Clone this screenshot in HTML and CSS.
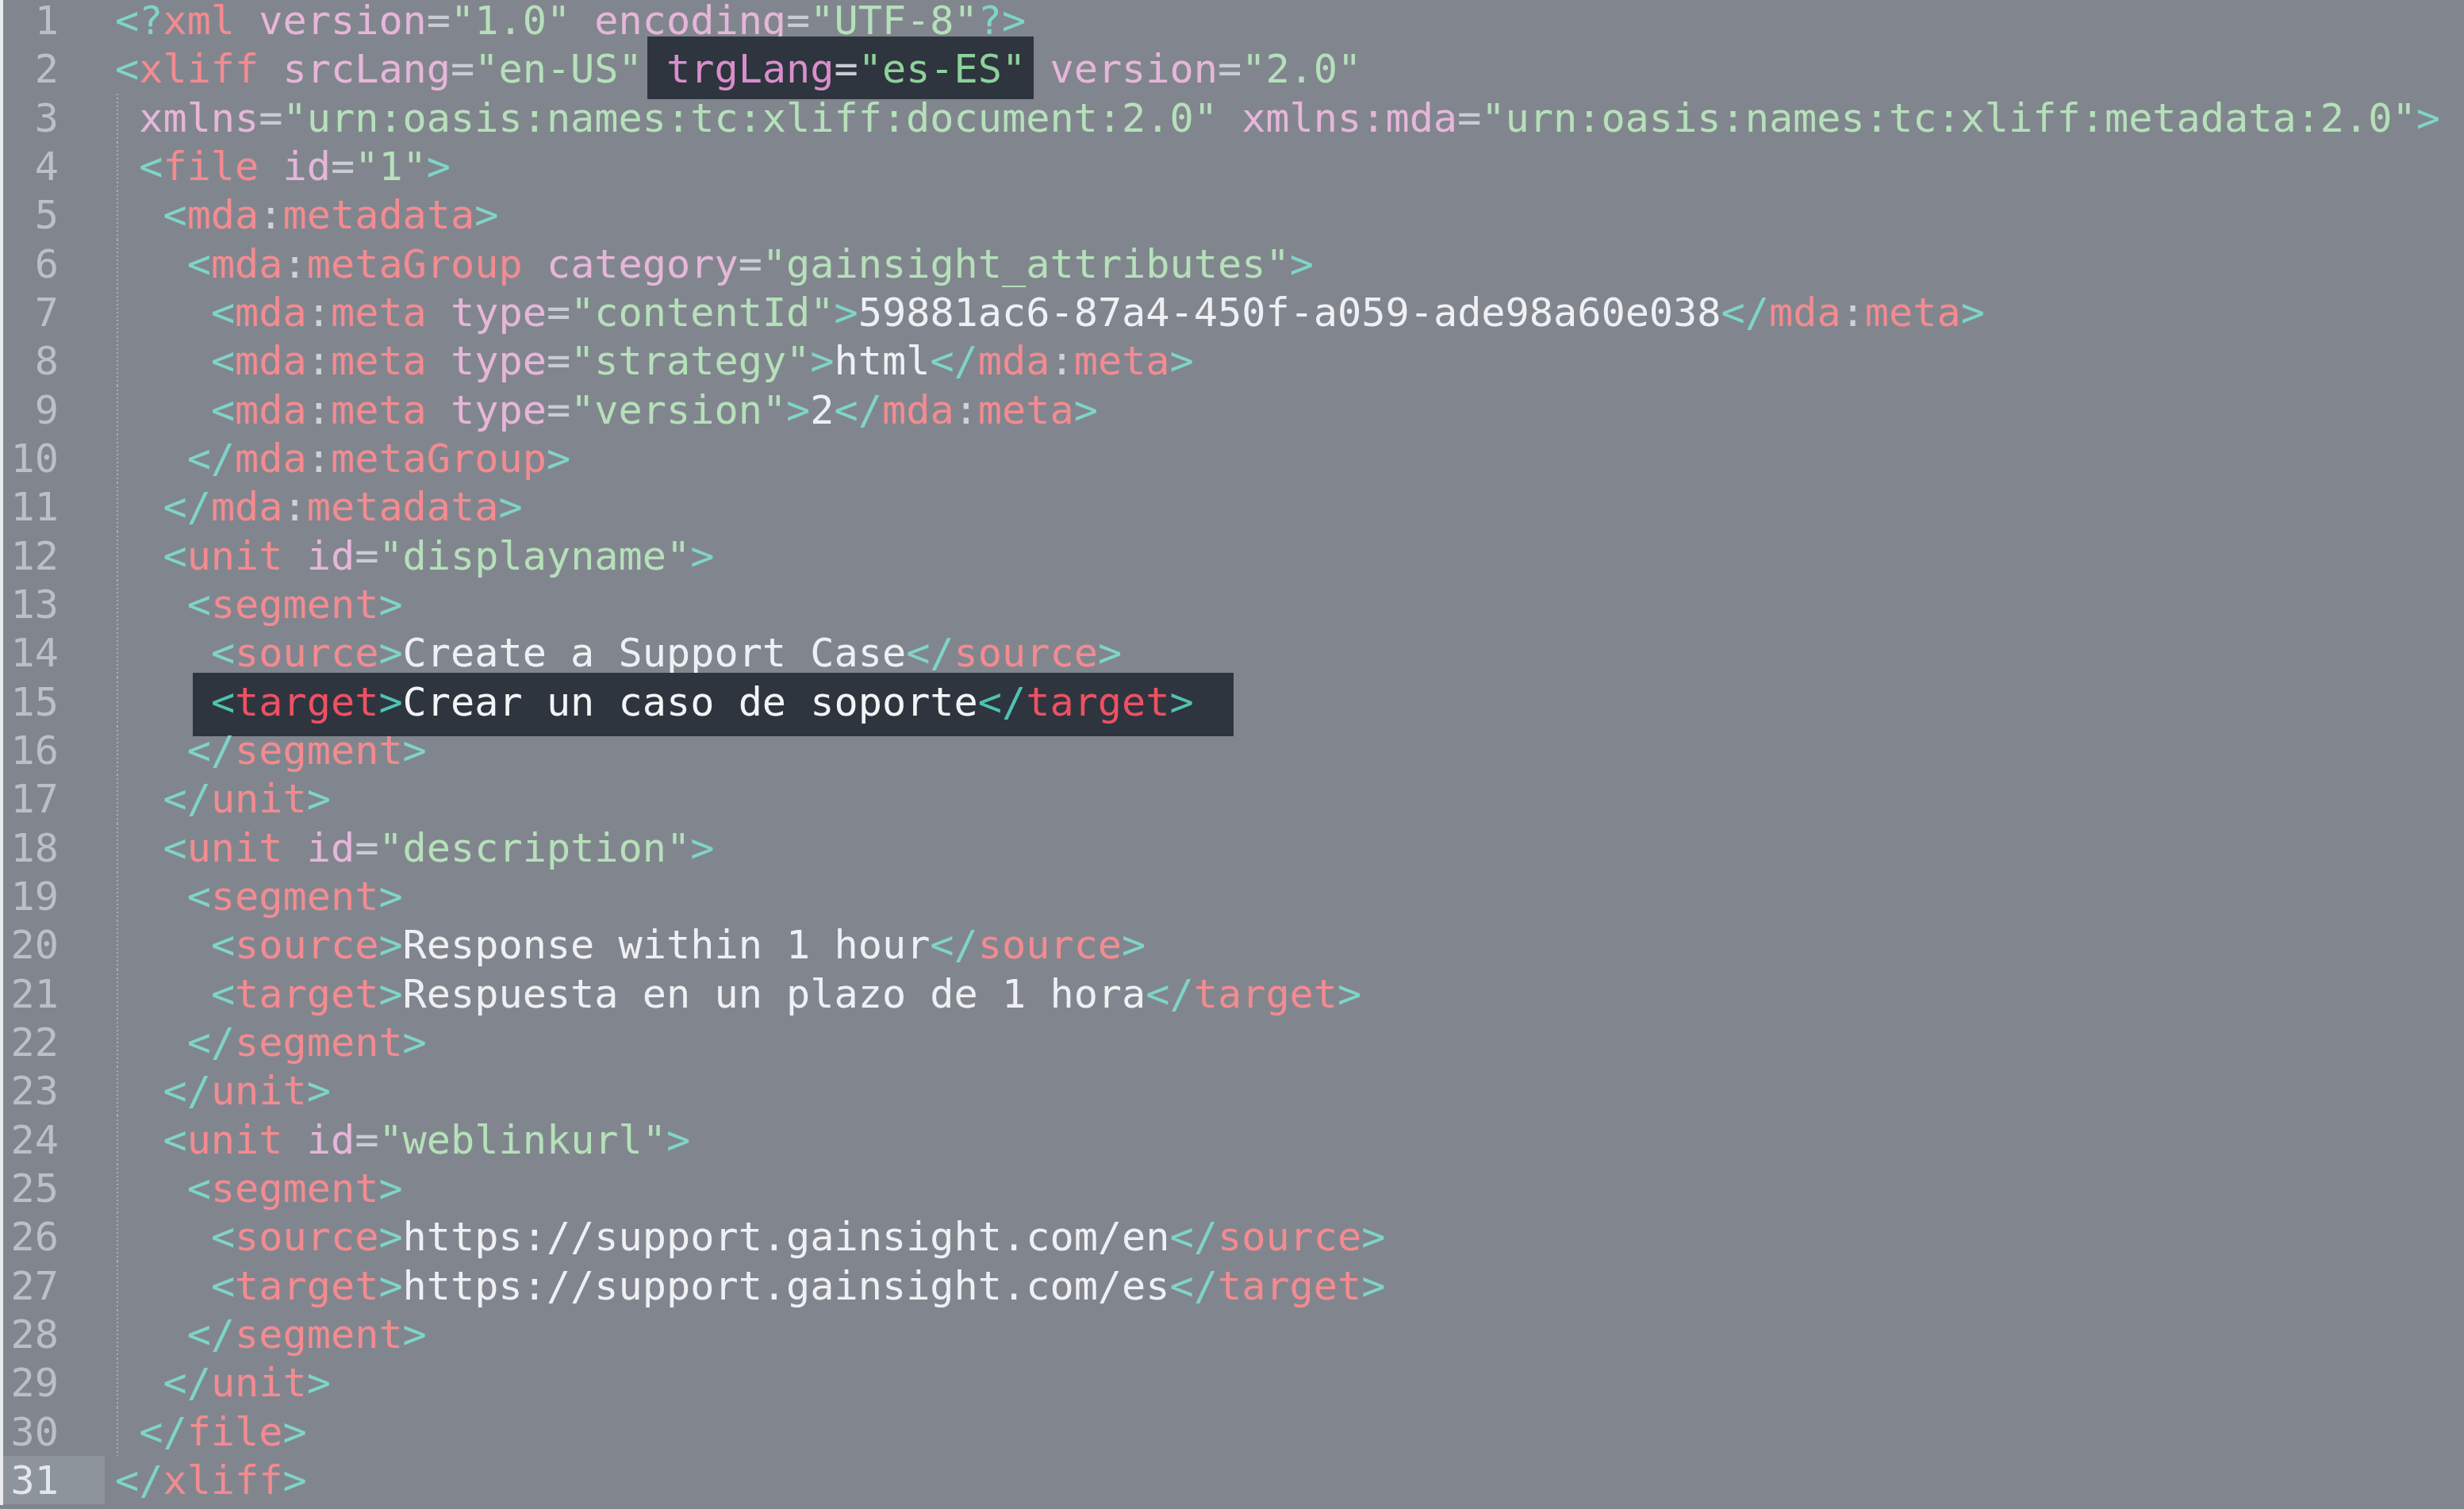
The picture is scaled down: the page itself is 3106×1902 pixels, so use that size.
FILE: index.html
```html
<!DOCTYPE html>
<html lang="en">
<head>
    <meta charset="UTF-8">
    <meta name="viewport" content="width=device-width, initial-scale=1.0">
    <title>strings_es-ES.xlf</title>
    <link rel="stylesheet" href="styles.css">
</head>
<body>
    <div class="editor">
        <div class="line"><span class="ln">1</span><span class="code"><span class="p">&lt;?</span><span class="t">xml</span> <span class="a">version</span><span class="e">=</span><span class="s">"1.0"</span> <span class="a">encoding</span><span class="e">=</span><span class="s">"UTF-8"</span><span class="p">?&gt;</span></span></div>
        <div class="line"><span class="ln">2</span><span class="code"><span class="p">&lt;</span><span class="t">xliff</span> <span class="a">srcLang</span><span class="e">=</span><span class="s">"en-US"</span> <span class="mark mark-attr"><span class="a">trgLang</span><span class="e">=</span><span class="s">"es-ES"</span></span> <span class="a">version</span><span class="e">=</span><span class="s">"2.0"</span></span></div>
        <div class="line guide"><span class="ln">3</span><span class="code"> <span class="a">xmlns</span><span class="e">=</span><span class="s">"urn:oasis:names:tc:xliff:document:2.0"</span> <span class="a">xmlns:mda</span><span class="e">=</span><span class="s">"urn:oasis:names:tc:xliff:metadata:2.0"</span><span class="p">&gt;</span></span></div>
        <div class="line guide"><span class="ln">4</span><span class="code"> <span class="p">&lt;</span><span class="t">file</span> <span class="a">id</span><span class="e">=</span><span class="s">"1"</span><span class="p">&gt;</span></span></div>
        <div class="line guide"><span class="ln">5</span><span class="code">  <span class="p">&lt;</span><span class="t">mda<span class="c">:</span>metadata</span><span class="p">&gt;</span></span></div>
        <div class="line guide"><span class="ln">6</span><span class="code">   <span class="p">&lt;</span><span class="t">mda<span class="c">:</span>metaGroup</span> <span class="a">category</span><span class="e">=</span><span class="s">"gainsight_attributes"</span><span class="p">&gt;</span></span></div>
        <div class="line guide"><span class="ln">7</span><span class="code">    <span class="p">&lt;</span><span class="t">mda<span class="c">:</span>meta</span> <span class="a">type</span><span class="e">=</span><span class="s">"contentId"</span><span class="p">&gt;</span><span class="x">59881ac6-87a4-450f-a059-ade98a60e038</span><span class="p">&lt;/</span><span class="t">mda<span class="c">:</span>meta</span><span class="p">&gt;</span></span></div>
        <div class="line guide"><span class="ln">8</span><span class="code">    <span class="p">&lt;</span><span class="t">mda<span class="c">:</span>meta</span> <span class="a">type</span><span class="e">=</span><span class="s">"strategy"</span><span class="p">&gt;</span><span class="x">html</span><span class="p">&lt;/</span><span class="t">mda<span class="c">:</span>meta</span><span class="p">&gt;</span></span></div>
        <div class="line guide"><span class="ln">9</span><span class="code">    <span class="p">&lt;</span><span class="t">mda<span class="c">:</span>meta</span> <span class="a">type</span><span class="e">=</span><span class="s">"version"</span><span class="p">&gt;</span><span class="x">2</span><span class="p">&lt;/</span><span class="t">mda<span class="c">:</span>meta</span><span class="p">&gt;</span></span></div>
        <div class="line guide"><span class="ln">10</span><span class="code">   <span class="p">&lt;/</span><span class="t">mda<span class="c">:</span>metaGroup</span><span class="p">&gt;</span></span></div>
        <div class="line guide"><span class="ln">11</span><span class="code">  <span class="p">&lt;/</span><span class="t">mda<span class="c">:</span>metadata</span><span class="p">&gt;</span></span></div>
        <div class="line guide"><span class="ln">12</span><span class="code">  <span class="p">&lt;</span><span class="t">unit</span> <span class="a">id</span><span class="e">=</span><span class="s">"displayname"</span><span class="p">&gt;</span></span></div>
        <div class="line guide"><span class="ln">13</span><span class="code">   <span class="p">&lt;</span><span class="t">segment</span><span class="p">&gt;</span></span></div>
        <div class="line guide"><span class="ln">14</span><span class="code">    <span class="p">&lt;</span><span class="t">source</span><span class="p">&gt;</span><span class="x">Create a Support Case</span><span class="p">&lt;/</span><span class="t">source</span><span class="p">&gt;</span></span></div>
        <div class="line guide"><span class="ln">15</span><span class="code">    <span class="mark mark-line"><span class="p">&lt;</span><span class="t">target</span><span class="p">&gt;</span><span class="x">Crear un caso de soporte</span><span class="p">&lt;/</span><span class="t">target</span><span class="p">&gt;</span></span></span></div>
        <div class="line guide"><span class="ln">16</span><span class="code">   <span class="p">&lt;/</span><span class="t">segment</span><span class="p">&gt;</span></span></div>
        <div class="line guide"><span class="ln">17</span><span class="code">  <span class="p">&lt;/</span><span class="t">unit</span><span class="p">&gt;</span></span></div>
        <div class="line guide"><span class="ln">18</span><span class="code">  <span class="p">&lt;</span><span class="t">unit</span> <span class="a">id</span><span class="e">=</span><span class="s">"description"</span><span class="p">&gt;</span></span></div>
        <div class="line guide"><span class="ln">19</span><span class="code">   <span class="p">&lt;</span><span class="t">segment</span><span class="p">&gt;</span></span></div>
        <div class="line guide"><span class="ln">20</span><span class="code">    <span class="p">&lt;</span><span class="t">source</span><span class="p">&gt;</span><span class="x">Response within 1 hour</span><span class="p">&lt;/</span><span class="t">source</span><span class="p">&gt;</span></span></div>
        <div class="line guide"><span class="ln">21</span><span class="code">    <span class="p">&lt;</span><span class="t">target</span><span class="p">&gt;</span><span class="x">Respuesta en un plazo de 1 hora</span><span class="p">&lt;/</span><span class="t">target</span><span class="p">&gt;</span></span></div>
        <div class="line guide"><span class="ln">22</span><span class="code">   <span class="p">&lt;/</span><span class="t">segment</span><span class="p">&gt;</span></span></div>
        <div class="line guide"><span class="ln">23</span><span class="code">  <span class="p">&lt;/</span><span class="t">unit</span><span class="p">&gt;</span></span></div>
        <div class="line guide"><span class="ln">24</span><span class="code">  <span class="p">&lt;</span><span class="t">unit</span> <span class="a">id</span><span class="e">=</span><span class="s">"weblinkurl"</span><span class="p">&gt;</span></span></div>
        <div class="line guide"><span class="ln">25</span><span class="code">   <span class="p">&lt;</span><span class="t">segment</span><span class="p">&gt;</span></span></div>
        <div class="line guide"><span class="ln">26</span><span class="code">    <span class="p">&lt;</span><span class="t">source</span><span class="p">&gt;</span><span class="x">https://support.gainsight.com/en</span><span class="p">&lt;/</span><span class="t">source</span><span class="p">&gt;</span></span></div>
        <div class="line guide"><span class="ln">27</span><span class="code">    <span class="p">&lt;</span><span class="t">target</span><span class="p">&gt;</span><span class="x">https://support.gainsight.com/es</span><span class="p">&lt;/</span><span class="t">target</span><span class="p">&gt;</span></span></div>
        <div class="line guide"><span class="ln">28</span><span class="code">   <span class="p">&lt;/</span><span class="t">segment</span><span class="p">&gt;</span></span></div>
        <div class="line guide"><span class="ln">29</span><span class="code">  <span class="p">&lt;/</span><span class="t">unit</span><span class="p">&gt;</span></span></div>
        <div class="line guide"><span class="ln">30</span><span class="code"> <span class="p">&lt;/</span><span class="t">file</span><span class="p">&gt;</span></span></div>
        <div class="line current"><span class="ln">31</span><span class="code"><span class="p">&lt;/</span><span class="t">xliff</span><span class="p">&gt;</span></span></div>
    </div>
</body>
</html>
```

FILE: styles.css
```css
html, body {
    margin: 0;
    padding: 0;
    background-color: #81868e;
}
body {
    min-height: 1902px;
    overflow: hidden;
}
.editor {
    border-left: 4px solid #e9ebee;
    min-height: 1902px;
    box-sizing: border-box;
    margin-top: -5px;
    font-family: "DejaVu Sans Mono", "Liberation Mono", monospace;
    font-size: 50.2px;
}
.line {
    display: flex;
    height: 61.33px;
    line-height: 61.33px;
}
.ln {
    width: 128px;
    flex: none;
    box-sizing: border-box;
    padding-right: 58px;
    text-align: right;
    color: #bcc0c5;
}
.code {
    flex: 1;
    padding-left: 13px;
    white-space: pre;
    color: #eef0f3;
}
.guide .code {
    background-image: repeating-linear-gradient(to bottom, #a7adb4 0 2px, transparent 2px 5px);
    background-repeat: no-repeat;
    background-position: 15px 0;
    background-size: 2px 100%;
}
.current .ln {
    background-color: #8e949c;
    color: #e4e7ea;
}

/* syntax colours */
.p { color: #7fd4c8; }
.t { color: #f38b91; }
.c { color: #cfd3d8; }
.a { color: #e6b6d9; }
.e { color: #c9cdd2; }
.s { color: #b6e0ba; }
.x { color: #eef0f3; }

/* highlighted spans */
.mark {
    background-color: #2e353e;
}
.mark-attr {
    padding: 11px 10px 9px 24px;
    margin: 0 -10px 0 -24px;
}
.mark-line {
    padding: 7px 50px 14px 23px;
    margin: 0 -50px 0 -23px;
}
.mark .p { color: #4fc2b1; }
.mark .t { color: #ee5063; }
.mark .a { color: #d98ecb; }
.mark .s { color: #8ed19b; }
.mark .x { color: #f3f4f6; }
```
